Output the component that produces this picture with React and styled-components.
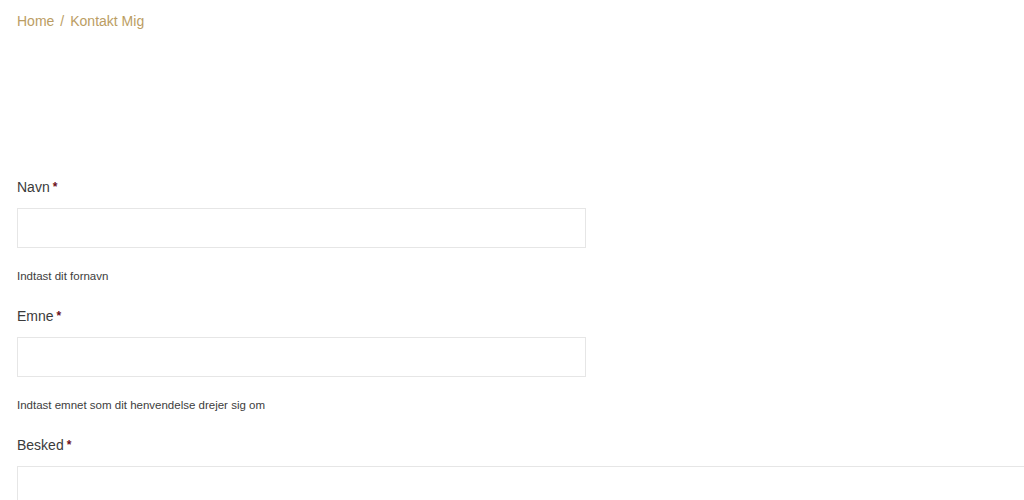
import styled, { createGlobalStyle } from 'styled-components';

const GlobalStyle = createGlobalStyle`
  body {
    margin: 0;
    background: #ffffff;
    font-family: "Liberation Sans", Arial, sans-serif;
    overflow: hidden;
  }
  * {
    box-sizing: border-box;
  }
`;

const Page = styled.div`
  padding: 11px 17px 0;
`;

const Breadcrumb = styled.nav`
  display: flex;
  gap: 6px;
  font-size: 14px;
  line-height: 20px;
  color: #bb9d63;
`;

const Crumb = styled.a`
  color: inherit;
  text-decoration: none;
`;

const Form = styled.form`
  margin-top: 146px;
  display: flex;
  flex-direction: column;
  gap: 22px;
`;

const Field = styled.div`
  display: flex;
  flex-direction: column;
`;

const Label = styled.label`
  font-size: 14px;
  line-height: 20px;
  color: #3b3b3b;
  margin-bottom: 11px;
  & > span {
    color: #6b1020;
    font-size: 12px;
    font-weight: bold;
    margin-left: 3px;
    vertical-align: top;
  }
`;

const Input = styled.input`
  width: 569px;
  height: 40px;
  border: 1px solid #e6e6e6;
  outline: none;
  padding: 0 12px;
  font-size: 14px;
`;

const TextArea = styled.textarea`
  width: 1040px;
  height: 120px;
  border: 1px solid #e6e6e6;
  outline: none;
  resize: none;
  padding: 12px;
  font-size: 14px;
`;

const Help = styled.div`
  margin-top: 20px;
  font-size: 11.5px;
  line-height: 16px;
  color: #3d3d3d;
`;

const App = () => {
  return (
    <>
      <GlobalStyle />
      <Page>
        <Breadcrumb>
          <Crumb href="#">Home</Crumb>
          <span>/</span>
          <span>Kontakt Mig</span>
        </Breadcrumb>

        <Form onSubmit={(e) => e.preventDefault()}>
          <Field>
            <Label>
              Navn<span>*</span>
            </Label>
            <Input type="text" />
            <Help>Indtast dit fornavn</Help>
          </Field>
          <Field>
            <Label>
              Emne<span>*</span>
            </Label>
            <Input type="text" />
            <Help>Indtast emnet som dit henvendelse drejer sig om</Help>
          </Field>
          <Field>
            <Label>
              Besked<span>*</span>
            </Label>
            <TextArea />
          </Field>
        </Form>
      </Page>
    </>
  );
};

export default App;
